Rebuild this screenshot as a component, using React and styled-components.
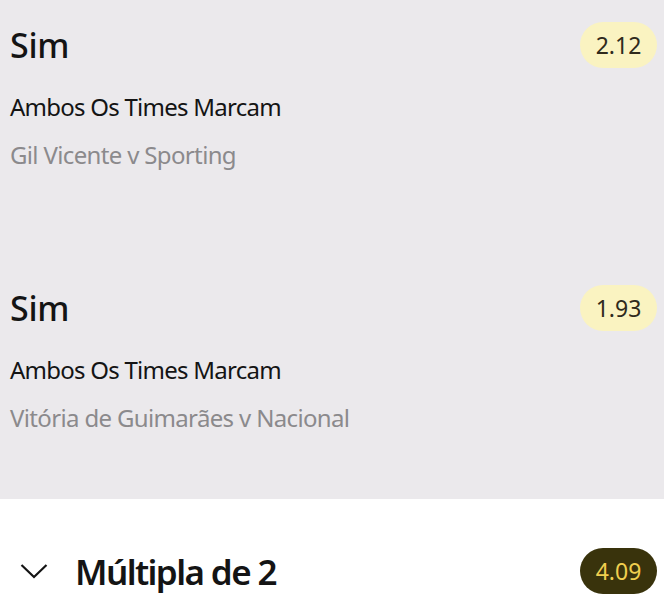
import React from 'react';
import styled, { createGlobalStyle } from 'styled-components';

const GlobalStyle = createGlobalStyle`
  body, html {
    margin: 0;
    padding: 0;
    width: 100%;
    height: 100%;
    overflow: hidden;
    background: #ffffff;
  }
  * { box-sizing: border-box; }
`;

const Page = styled.div`
  width: 664px;
  height: 612px;
  display: flex;
  flex-direction: column;
  font-family: "Noto Sans", "Open Sans", sans-serif;
  color: #141414;
`;

const SelectionList = styled.div`
  background: #ebe9ec;
  display: flex;
  flex-direction: column;
  gap: 27px;
`;

const Selection = styled.div`
  display: flex;
  flex-direction: column;
  padding: 22px 7px 64px 10px;
`;

const HeaderRow = styled.div`
  display: flex;
  align-items: center;
  justify-content: space-between;
  height: 46px;
`;

const Outcome = styled.div`
  font-size: 34px;
  font-weight: 500;
  letter-spacing: -0.3px;
`;

const Odds = styled.div`
  display: flex;
  align-items: center;
  justify-content: center;
  width: 77px;
  height: 46px;
  border-radius: 23px;
  font-size: 23px;
  background: ${p => (p.$dark ? '#39330c' : '#faf3c1')};
  color: ${p => (p.$dark ? '#f0cf4f' : '#2f2a1c')};
`;

const Market = styled.div`
  margin-top: 22px;
  font-size: 24px;
  line-height: 34px;
  letter-spacing: -0.75px;
`;

const EventName = styled.div`
  margin-top: 14px;
  font-size: 24px;
  line-height: 34px;
  letter-spacing: -0.65px;
  color: #8b8a8c;
`;

const Footer = styled.div`
  flex: 1;
  background: #ffffff;
  padding: 48px 7px 0 20px;
`;

const FooterRow = styled.div`
  display: flex;
  align-items: center;
  height: 48px;
`;

const Chevron = styled.svg`
  width: 28px;
  height: 16px;
  margin-right: 27px;
`;

const Title = styled.div`
  flex: 1;
  font-size: 35px;
  font-weight: 600;
  letter-spacing: -1.6px;
`;

const selections = [
  { outcome: 'Sim', odds: '2.12', market: 'Ambos Os Times Marcam', event: 'Gil Vicente v Sporting' },
  { outcome: 'Sim', odds: '1.93', market: 'Ambos Os Times Marcam', event: 'Vitória de Guimarães v Nacional' },
];

const App = () => (
  <>
    <GlobalStyle />
    <Page>
      <SelectionList>
        {selections.map((s, i) => (
          <Selection key={i}>
            <HeaderRow>
              <Outcome>{s.outcome}</Outcome>
              <Odds>{s.odds}</Odds>
            </HeaderRow>
            <Market>{s.market}</Market>
            <EventName>{s.event}</EventName>
          </Selection>
        ))}
      </SelectionList>
      <Footer>
        <FooterRow>
          <Chevron viewBox="0 0 28 16" fill="none">
            <path d="M1.5 2 L14 14 L26.5 2" stroke="#141414" strokeWidth="2.2" />
          </Chevron>
          <Title>Múltipla de 2</Title>
          <Odds $dark>4.09</Odds>
        </FooterRow>
      </Footer>
    </Page>
  </>
);

export default App;
